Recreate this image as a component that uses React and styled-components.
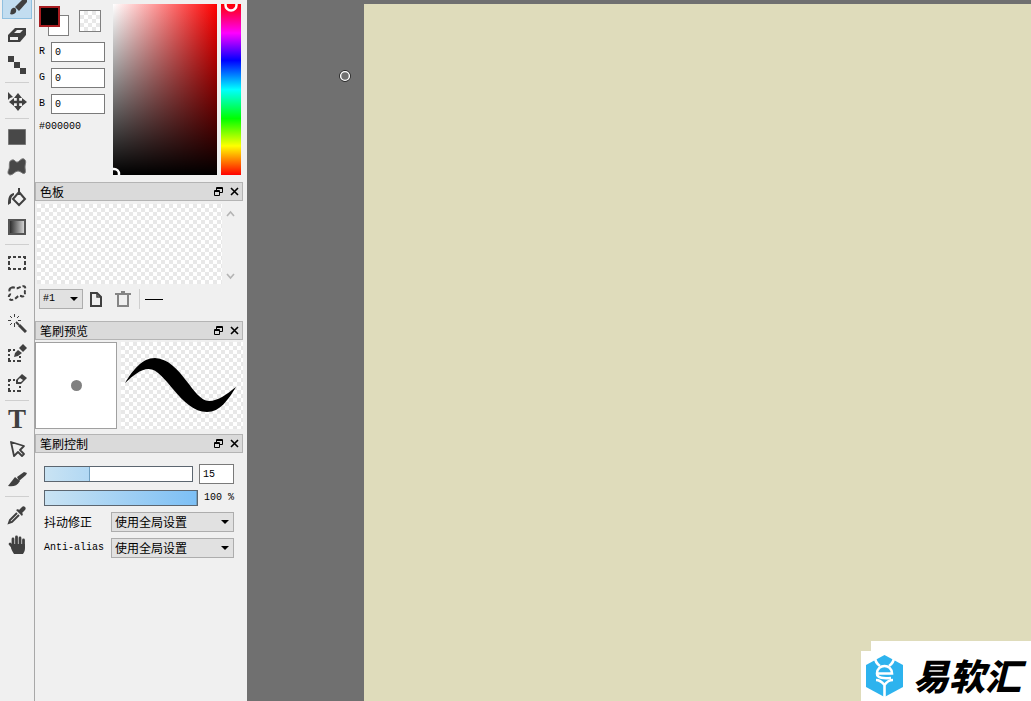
import { useState } from 'react';
import styled, { createGlobalStyle, css } from 'styled-components';

const GlobalStyle = createGlobalStyle`
  * {
    box-sizing: border-box;
  }
  body {
    margin: 0;
    overflow: hidden;
    background: #f0f0f0;
    color: #000;
    font-family: 'Liberation Mono', 'Noto Sans CJK SC', monospace;
    font-size: 10px;
    line-height: 14px;
  }
  button, input, select {
    font: inherit;
    color: inherit;
    margin: 0;
    border-radius: 0;
  }
`;

const checker = css`
  background-color: #fff;
  background-image: conic-gradient(#e8e8e8 25%, transparent 0 50%, #e8e8e8 0 75%, transparent 0);
  background-size: 8px 8px;
`;

const AppContainer = styled.div`
  display: flex;
  height: 100vh;
  overflow: hidden;
`;

const Toolbar = styled.nav`
  display: flex;
  flex-direction: column;
  flex: none;
  align-items: center;
  width: 35px;
  height: 100vh;
  border-right: 1px solid #a8a8a8;
`;

const ToolList = styled.div`
  display: flex;
  flex-direction: column;
  margin-top: -10px;
`;

const ToolButton = styled.button`
  display: flex;
  align-items: center;
  justify-content: center;
  width: 30px;
  height: 28px;
  margin: 1px 0;
  padding: 0;
  border: 1px solid ${({ $active }) => ($active ? '#90c0e0' : 'transparent')};
  background: ${({ $active }) => ($active ? '#c2ddf0' : 'transparent')};
  color: #404040;
  svg {
    display: block;
  }
`;

const ToolLetter = styled.span`
  font-family: 'Liberation Serif', serif;
  font-size: 27px;
  line-height: 28px;
  font-weight: bold;
`;

const ToolDivider = styled.hr`
  width: 24px;
  height: 1px;
  margin: 2px auto 3px;
  border: 0;
  background: #cfcfcf;
`;

const Docks = styled.aside`
  display: flex;
  flex-direction: column;
  flex: none;
  width: 212px;
  padding-right: 4px;
`;

const ColorPanel = styled.section`
  display: flex;
  gap: 8px;
  height: 182px;
  padding: 4px 2px 7px 4px;
`;

const ColorFields = styled.div`
  display: flex;
  flex-direction: column;
  width: 66px;
`;

const Swatches = styled.div`
  display: flex;
  height: 38px;
  padding-top: 2px;
`;

const SwatchPair = styled.div`
  position: relative;
  width: 40px;
  height: 31px;
`;

const Swatch = styled.button`
  position: absolute;
  width: 21px;
  height: 21px;
  padding: 0;
  ${({ $front }) =>
    $front
      ? css`
          top: 0;
          left: 0;
          z-index: 1;
          background: #000;
          border: 2px solid #a81c20;
        `
      : css`
          top: 9px;
          left: 9px;
          background: #fff;
          border: 1px solid #808080;
        `}
`;

const ClearSwatch = styled.button`
  width: 22px;
  height: 22px;
  margin-top: 4px;
  padding: 0;
  border: 1px solid #808080;
  ${checker}
`;

const ChannelField = styled.label`
  display: flex;
  align-items: center;
  gap: 6px;
  height: 20px;
  margin-bottom: 6px;
`;

const TextInput = styled.input`
  flex: 1;
  min-width: 0;
  height: 20px;
  padding: 0 3px;
  border: 1px solid #7a7a7a;
  background: #fff;
  outline: 0;
`;

const SaturationBox = styled.div`
  flex: 1;
  overflow: hidden;
  background: linear-gradient(to top, #000, transparent), linear-gradient(to right, #fff, #f00);
  svg {
    display: block;
    height: 100%;
    width: 100%;
  }
`;

const HueBar = styled.div`
  width: 20px;
  margin-left: -4px;
  background: linear-gradient(to top, #f00, #ff0 17%, #0f0 33%, #0ff 50%, #00f 67%, #f0f 83%, #f00);
  svg {
    display: block;
  }
`;

const DockTitle = styled.header`
  display: flex;
  align-items: center;
  flex: none;
  height: 19px;
  padding-left: 4px;
  border: 1px solid #b4b4b4;
  background: #dadada;
`;

const DockName = styled.h2`
  flex: 1;
  margin: 0;
  font-family: 'Noto Sans CJK SC', sans-serif;
  font-size: 12px;
  line-height: 16px;
  font-weight: normal;
`;

const TitleButton = styled.button`
  display: flex;
  align-items: center;
  justify-content: center;
  width: 16px;
  height: 16px;
  padding: 0;
  border: 0;
  background: none;
`;

const PaletteGrid = styled.div`
  display: flex;
  height: 80px;
  margin: 3px 4px 0 2px;
`;

const PaletteCells = styled.div`
  flex: 1;
  ${checker}
`;

const PaletteScroll = styled.div`
  display: flex;
  flex-direction: column;
  justify-content: space-between;
  align-items: center;
  width: 17px;
  padding: 6px 0 4px;
`;

const PaletteTools = styled.div`
  display: flex;
  align-items: center;
  height: 20px;
  margin: 5px 4px 12px;
`;

const IconButton = styled.button`
  display: flex;
  align-items: center;
  justify-content: center;
  width: 26px;
  height: 20px;
  margin-right: 1px;
  padding: 0;
  border: 0;
  background: none;
`;

const ToolsSplit = styled.span`
  width: 1px;
  height: 20px;
  margin-left: 2px;
  background: #cfcfcf;
`;

const ActiveLine = styled.span`
  width: 18px;
  height: 1px;
  margin-left: 5px;
  background: #000;
`;

const SelectBox = styled.div`
  display: flex;
  position: relative;
  width: ${({ $width }) => $width}px;
  height: 20px;
  &::after {
    content: '';
    position: absolute;
    top: 8px;
    right: 5px;
    border: 4px solid transparent;
    border-top-color: #000;
    border-bottom: 0;
    pointer-events: none;
  }
`;

const Select = styled.select`
  flex: 1;
  min-width: 0;
  appearance: none;
  padding: 0 3px;
  border: 1px solid #adadad;
  background: #e1e1e1;
  outline: 0;
  font-family: ${({ $cjk }) => ($cjk ? "'Noto Sans CJK SC', sans-serif" : 'inherit')};
  font-size: ${({ $cjk }) => ($cjk ? 12 : 10)}px;
  line-height: 18px;
`;

const PreviewRow = styled.div`
  display: flex;
  gap: 4px;
  height: 87px;
  margin: 2px 0 5px;
  svg {
    display: block;
  }
`;

const TipPreview = styled.div`
  display: flex;
  align-items: center;
  justify-content: center;
  width: 82px;
  border: 1px solid #a0a0a0;
  background: #fff;
`;

const StrokePreview = styled.div`
  flex: 1;
  ${checker}
`;

const Controls = styled.div`
  display: flex;
  flex-direction: column;
  padding: 11px 9px;
`;

const ControlRow = styled.div`
  display: flex;
  align-items: center;
  justify-content: space-between;
  height: ${({ $height }) => $height}px;
`;

const SizeInput = styled(TextInput)`
  flex: none;
  width: 35px;
`;

const Slider = styled.input`
  appearance: none;
  flex: 1;
  min-width: 0;
  height: 16px;
  margin-right: 6px;
  border: 1px solid #5c6670;
  background: linear-gradient(to right, transparent var(--fill), #fff var(--fill)),
    linear-gradient(to right, #c9e3f3, #7cbff5);
  &::-webkit-slider-thumb {
    appearance: none;
    width: 1px;
    height: 14px;
    background: #6f9fc0;
  }
`;

const ControlLabel = styled.label`
  font-family: ${({ $cjk }) => ($cjk ? "'Noto Sans CJK SC', sans-serif" : 'inherit')};
  font-size: ${({ $cjk }) => ($cjk ? 12 : 10)}px;
`;

const Workspace = styled.main`
  position: relative;
  display: flex;
  flex: 1;
  min-width: 0;
  padding: 4px 0 0 117px;
  background: #707070;
`;

const Paper = styled.div`
  flex: 1;
  background: #dfdcbb;
`;

const BrushCursor = styled.svg`
  position: absolute;
  top: 70px;
  left: 92px;
`;

const Watermark = styled.div`
  position: absolute;
  right: 0;
  bottom: 0;
  display: flex;
  align-items: center;
  gap: 10px;
  width: 170px;
  height: 50px;
  padding-left: 5px;
  background: #fff;
  &::before {
    content: '';
    position: absolute;
    right: 0;
    bottom: 50px;
    width: 160px;
    height: 10px;
    background: #fff;
  }
`;

const WatermarkName = styled.strong`
  font-family: 'Noto Sans CJK SC', sans-serif;
  font-size: 36px;
  line-height: 46px;
  padding-bottom: 4px;
  font-weight: 900;
  font-style: italic;
  white-space: nowrap;
`;

const tools = [
  {
    name: '笔刷',
    art: (
      <>
        <path d="M8 12 17 3h4v3l-9 10z" fill="currentColor" />
        <path d="M3 19c1-1 0-5 3-6 2-1 4 1 3 4-1 2-4 3-6 2z" fill="currentColor" />
      </>
    ),
  },
  {
    name: '橡皮擦',
    art: (
      <>
        <path d="M1 10 8 3h11v7l-6 7H1z" fill="currentColor" />
        <path d="M3 12h8v3H3zM7 8l3-3h6l-3 3z" fill="#f0f0f0" />
      </>
    ),
  },
  { name: '点', art: <path d="M1 1h6v6H1zM7 7h6v6H7zM13 13h6v6h-6z" fill="currentColor" /> },
  null,
  {
    name: '移动',
    art: (
      <>
        <path d="M11 5v13M5 11h13" stroke="currentColor" strokeWidth="2.4" />
        <path d="m11 2 4 5H7zM11 20l4-5H7zM2 11l5-4v8zM20 11l-5-4v8z" fill="currentColor" />
        <path d="M1 1v8l2-2 3-1z" fill="currentColor" />
      </>
    ),
  },
  null,
  { name: '矩形', art: <path d="M1.5 2.5h17v15h-17z" fill="#484848" stroke="#777" /> },
  {
    name: '图形',
    art: (
      <path
        d="M5 3c3-1 3 3 6 2 2-1 3-4 6-3 3 2 1 5 1 8s1 4 0 6c-2 2-4-2-7-2s-5 4-8 4c-3-1-2-4-1-6C3 9 1 4 5 3z"
        fill="#484848"
        stroke="#777"
      />
    ),
  },
  {
    name: '填充',
    art: (
      <>
        <path d="m12 5 6 7-6 6-6-6z" fill="none" stroke="currentColor" strokeWidth="2" />
        <path d="M12 1v7" stroke="currentColor" strokeWidth="2" />
        <path d="M7 6C2 7 1 10 1 18l3-2c0-4 0-6 3-8z" fill="currentColor" />
      </>
    ),
  },
  {
    name: '渐变',
    art: (
      <>
        <defs>
          <linearGradient id="toolGradient">
            <stop offset="0" stopColor="#222" />
            <stop offset="1" stopColor="#ddd" />
          </linearGradient>
        </defs>
        <path d="M2 3h16v14H2z" fill="url(#toolGradient)" stroke="#555" strokeWidth="2" />
      </>
    ),
  },
  null,
  {
    name: '选择',
    art: (
      <path
        d="M1 4h3m2 0h3m2 0h3m2 0h3M1 16h3m2 0h3m2 0h3m2 0h3M2 3v3m0 2v4m0 2v3M18 3v3m0 2v4m0 2v3"
        fill="none"
        stroke="currentColor"
        strokeWidth="2"
      />
    ),
  },
  {
    name: '套索',
    art: (
      <path
        d="M4 5c3-2 4 1 7 0s6-3 7-1c1 3-1 4 0 7 0 2-2 3-4 2s-3 0-5 2-6 3-7 0c-1-3 2-3 1-5-1-2-1-4 1-5z"
        fill="none"
        stroke="currentColor"
        strokeWidth="2"
        strokeDasharray="4 2"
      />
    ),
  },
  {
    name: '魔棒',
    art: (
      <>
        <path
          d="M7.5 1v3M7.5 10v4M1 7.5h3M11 7.5h3M3 3l2 2M12 3l-2 2M3 12l2-2"
          fill="none"
          stroke="currentColor"
        />
        <path d="m9 9 3 3" stroke="currentColor" strokeWidth="2" />
        <path d="m12 12 7 7" stroke="currentColor" strokeWidth="3" />
      </>
    ),
  },
  {
    name: '选择笔',
    art: (
      <>
        <path
          d="M1 7h3m2 0h2M1 18h3m2 0h2m2 0h4M2 6v3m0 2v2m0 2v4M13 13v2m0 2v2"
          fill="none"
          stroke="currentColor"
          strokeWidth="2"
        />
        <path d="m7 14 1-4 3-3 4 3-4 3zM12 5l4-4 4 4-4 4z" fill="currentColor" />
      </>
    ),
  },
  {
    name: '选择橡皮',
    art: (
      <>
        <path
          d="M1 7h3m2 0h2M1 18h3m2 0h2m2 0h4M2 6v3m0 2v2m0 2v4M13 13v2m0 2v2"
          fill="none"
          stroke="currentColor"
          strokeWidth="2"
        />
        <path d="m9 7 6-6 5 4-6 6H9z" fill="currentColor" />
        <path d="m11 7 2-2 3 2-2 2h-3z" fill="#f0f0f0" />
      </>
    ),
  },
  null,
  { name: '文字', letter: 'T' },
  {
    name: '操作',
    art: (
      <path
        d="m4 3 13 4-4 4 4 4-2 2-4-4-4 4z"
        fill="none"
        stroke="currentColor"
        strokeWidth="1.8"
        strokeLinejoin="round"
      />
    ),
  },
  {
    name: '分割',
    art: (
      <>
        <path d="m10 8 7-5 3 1-1 2-7 6z" fill="currentColor" />
        <path d="m8 8 5 4c-3 5-7 6-12 5z" fill="currentColor" />
      </>
    ),
  },
  null,
  {
    name: '吸管',
    art: (
      <>
        <path d="m10 8-7 7-1 3 3-1 7-7" fill="none" stroke="currentColor" strokeWidth="2" />
        <path d="m9 5 2-1 1 1 3-3c2-2 5 1 3 3l-3 3 1 1-1 2z" fill="currentColor" />
      </>
    ),
  },
  {
    name: '抓手',
    art: (
      <>
        <path
          d="M6 11V4M9.5 11V2M13 11V3M16.5 12V5M7 14 3 9"
          stroke="currentColor"
          strokeWidth="2.8"
          strokeLinecap="round"
        />
        <path d="M5 9h13v4c0 3-1 4-2 6H7c-1-2-2-3-3-6z" fill="currentColor" />
      </>
    ),
  },
];

function Dock({ title, children }) {
  return (
    <section>
      <DockTitle>
        <DockName>{title}</DockName>
        <TitleButton aria-label={`浮动 ${title}`}>
          <svg width="9" height="9" viewBox="0 0 9 9" fill="none" stroke="#000">
            <path d="M.5 3.5h5v5h-5zM0 4.5h6M2.5 3V.5h6v5H6M2 1.5h7" />
          </svg>
        </TitleButton>
        <TitleButton aria-label={`关闭 ${title}`}>
          <svg width="9" height="9" viewBox="0 0 9 9">
            <path d="m1 1 7 7M8 1 1 8" stroke="#000" strokeWidth="1.6" />
          </svg>
        </TitleButton>
      </DockTitle>
      {children}
    </section>
  );
}

function App() {
  const [activeTool, setActiveTool] = useState('笔刷');
  const [rgb, setRgb] = useState({ R: '0', G: '0', B: '0' });
  const [size, setSize] = useState(15);
  const [opacity, setOpacity] = useState(100);

  const hex = Object.values(rgb)
    .map((value) => Number(value).toString(16).padStart(2, '0'))
    .join('');

  return (
    <AppContainer>
      <GlobalStyle />
      <Toolbar>
        <ToolList>
          {tools.map((tool, index) =>
            tool ? (
              <ToolButton
                key={tool.name}
                aria-label={tool.name}
                $active={tool.name === activeTool}
                onClick={() => setActiveTool(tool.name)}
              >
                {tool.letter ? (
                  <ToolLetter>{tool.letter}</ToolLetter>
                ) : (
                  <svg width="20" height="20" viewBox="0 0 20 20">
                    {tool.art}
                  </svg>
                )}
              </ToolButton>
            ) : (
              <ToolDivider key={index} />
            )
          )}
        </ToolList>
      </Toolbar>

      <Docks>
        <ColorPanel>
          <ColorFields>
            <Swatches>
              <SwatchPair>
                <Swatch $front aria-label="前景色" />
                <Swatch aria-label="背景色" />
              </SwatchPair>
              <ClearSwatch aria-label="透明" />
            </Swatches>
            {['R', 'G', 'B'].map((channel) => (
              <ChannelField key={channel}>
                {channel}
                <TextInput
                  value={rgb[channel]}
                  onChange={(e) => setRgb({ ...rgb, [channel]: e.target.value })}
                />
              </ChannelField>
            ))}
            <span>#{hex}</span>
          </ColorFields>
          <SaturationBox>
            <svg viewBox="0 0 104 171">
              <circle cx="1" cy="170" r="5" fill="none" stroke="#fff" strokeWidth="2.5" />
            </svg>
          </SaturationBox>
          <HueBar>
            <svg width="20" height="12">
              <circle cx="10" cy="1" r="5.5" fill="none" stroke="#fff" strokeWidth="2.5" />
            </svg>
          </HueBar>
        </ColorPanel>

        <Dock title="色板">
          <PaletteGrid>
            <PaletteCells />
            <PaletteScroll>
              <svg width="9" height="7" fill="none" stroke="#b4b4b4" strokeWidth="1.6">
                <path d="m1 6 3.5-4L8 6" />
              </svg>
              <svg width="9" height="7" fill="none" stroke="#b4b4b4" strokeWidth="1.6">
                <path d="m1 1 3.5 4L8 1" />
              </svg>
            </PaletteScroll>
          </PaletteGrid>
          <PaletteTools>
            <SelectBox $width={44}>
              <Select aria-label="色板编号">
                <option>#1</option>
              </Select>
            </SelectBox>
            <IconButton aria-label="新建">
              <svg width="12" height="16" fill="none" stroke="#404040" strokeWidth="2">
                <path d="M1 2h6l4 4v9H1z" />
                <path d="M7 2v4h4" strokeWidth="1.5" />
              </svg>
            </IconButton>
            <IconButton aria-label="删除">
              <svg width="16" height="16" fill="none" stroke="#858585" strokeWidth="2">
                <path d="M0 3h16M6 1h4M3 3v12h10V3" />
              </svg>
            </IconButton>
            <ToolsSplit />
            <ActiveLine />
          </PaletteTools>
        </Dock>

        <Dock title="笔刷预览">
          <PreviewRow>
            <TipPreview>
              <svg width="11" height="11">
                <circle cx="5.5" cy="5.5" r="5.5" fill="#808080" />
              </svg>
            </TipPreview>
            <StrokePreview>
              <svg width="122" height="87">
                <path d="M4 41C12 28 21 16 34 16 60 17 72 59 88 59 97 59 106 52 115 45 107 58 99 70 86 70 60 70 44 27 28 27 19 27 12 34 4 41Z" />
              </svg>
            </StrokePreview>
          </PreviewRow>
        </Dock>

        <Dock title="笔刷控制">
          <Controls>
            <ControlRow $height={20}>
              <Slider
                type="range"
                aria-label="尺寸"
                min="0"
                max="50"
                value={size}
                onChange={(e) => setSize(e.target.value)}
                style={{ '--fill': `${size * 2}%` }}
              />
              <SizeInput aria-label="尺寸数值" value={size} onChange={(e) => setSize(e.target.value)} />
            </ControlRow>
            <ControlRow $height={28}>
              <Slider
                type="range"
                id="opacity"
                min="0"
                max="100"
                value={opacity}
                onChange={(e) => setOpacity(e.target.value)}
                style={{ '--fill': `${opacity}%` }}
              />
              <ControlLabel htmlFor="opacity">{opacity} %</ControlLabel>
            </ControlRow>
            <ControlRow $height={20}>
              <ControlLabel htmlFor="stabilizer" $cjk>
                抖动修正
              </ControlLabel>
              <SelectBox $width={123}>
                <Select id="stabilizer" $cjk>
                  <option>使用全局设置</option>
                </Select>
              </SelectBox>
            </ControlRow>
            <ControlRow $height={32}>
              <ControlLabel htmlFor="antialias">Anti-alias</ControlLabel>
              <SelectBox $width={123}>
                <Select id="antialias" $cjk>
                  <option>使用全局设置</option>
                </Select>
              </SelectBox>
            </ControlRow>
          </Controls>
        </Dock>
      </Docks>

      <Workspace>
        <Paper />
        <BrushCursor width="12" height="12" fill="none">
          <circle cx="6" cy="6" r="5.4" stroke="#222" />
          <circle cx="6" cy="6" r="4.4" stroke="#fff" strokeWidth="1.4" />
        </BrushCursor>
        <Watermark>
          <svg width="37" height="42" viewBox="0 0 37 42">
            <path d="M18.5 0 37 10v22L18.5 42 0 32V10z" fill="#2db3ee" />
            <g fill="none" stroke="#fff" strokeWidth="2.6">
              <path d="M9 2c0 5 2 7 5 9M28 2c0 5-2 7-5 9" />
              <path d="M11 18.5h15c0-10-15-10-15 0 0 5 7 5 14 4.500" />
              <path d="M10 25c3 0 6 2 8.500 5 2-3 5-5 8.500-5M18.500 29v13" />
            </g>
          </svg>
          <WatermarkName>易软汇</WatermarkName>
        </Watermark>
      </Workspace>
    </AppContainer>
  );
}

export default App;
